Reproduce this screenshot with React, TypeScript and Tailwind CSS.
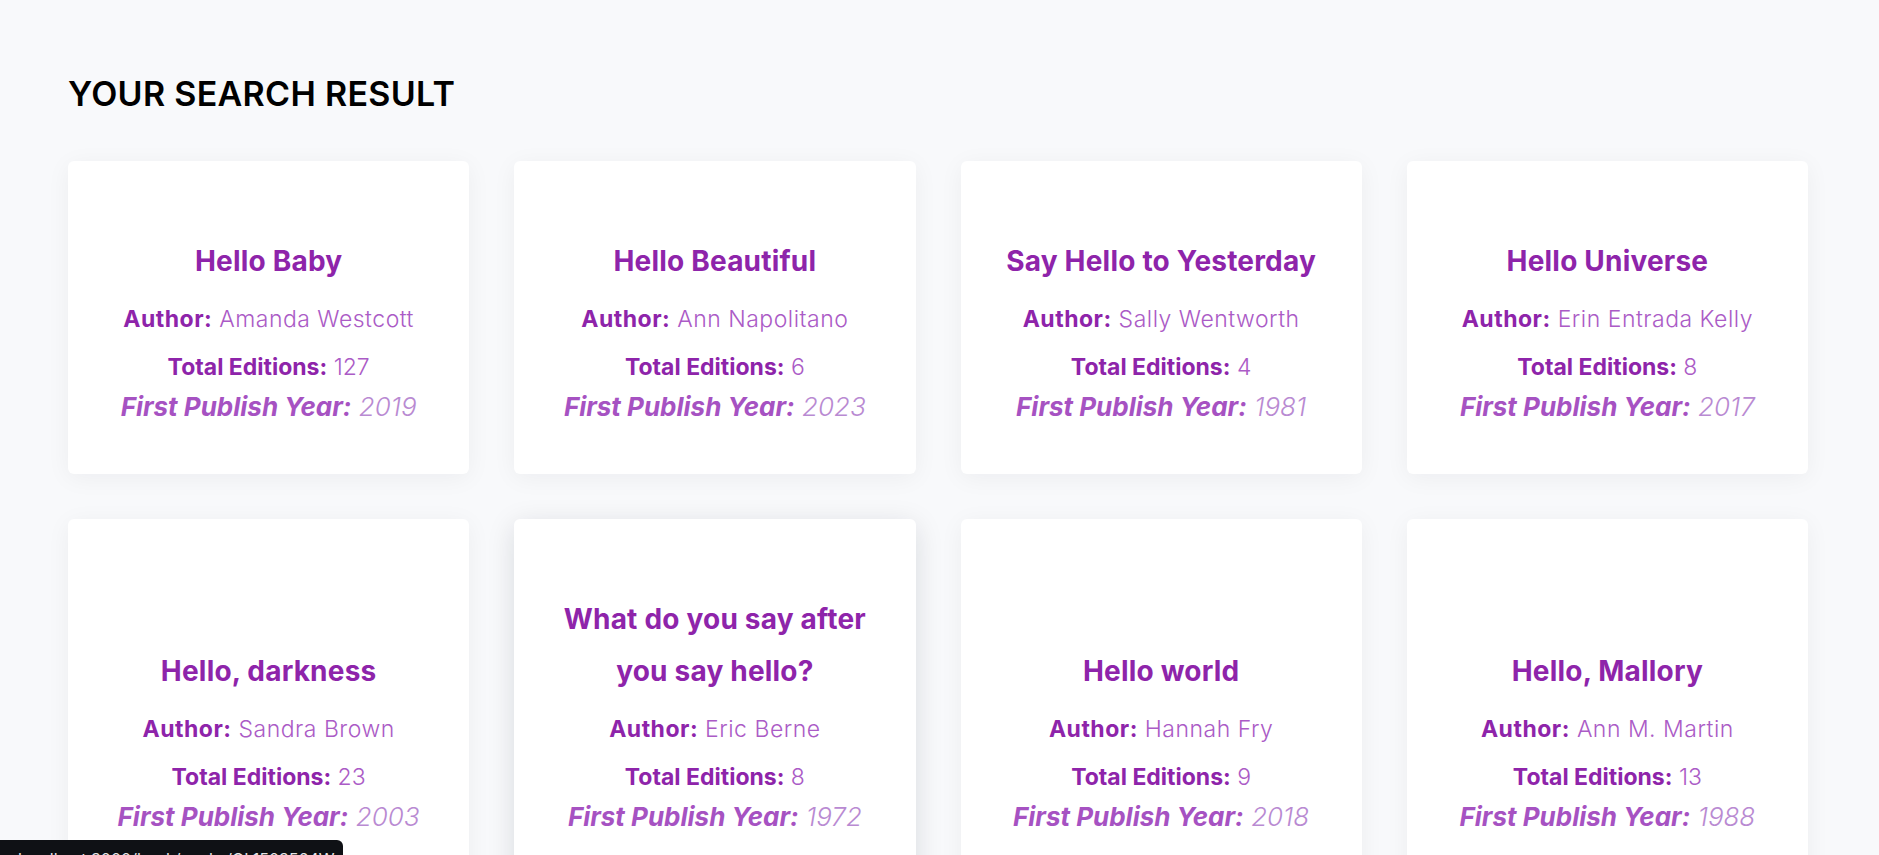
import React from "react";

type Book = { title: string; author: string; editions: number; year: number };

const books: Book[] = [
  { title: "Hello Baby", author: "Amanda Westcott", editions: 127, year: 2019 },
  { title: "Hello Beautiful", author: "Ann Napolitano", editions: 6, year: 2023 },
  { title: "Say Hello to Yesterday", author: "Sally Wentworth", editions: 4, year: 1981 },
  { title: "Hello Universe", author: "Erin Entrada Kelly", editions: 8, year: 2017 },
  { title: "Hello, darkness", author: "Sandra Brown", editions: 23, year: 2003 },
  { title: "What do you say after you say hello?", author: "Eric Berne", editions: 8, year: 1972 },
  { title: "Hello world", author: "Hannah Fry", editions: 9, year: 2018 },
  { title: "Hello, Mallory", author: "Ann M. Martin", editions: 13, year: 1988 },
];

function Card({ book, hovered }: { book: Book; hovered?: boolean }) {
  return (
    <a
      href="#"
      className={
        "flex flex-col justify-end rounded-[6px] bg-white px-8 pt-[74px] pb-[47px] text-center " +
        (hovered
          ? "shadow-[0_6px_28px_rgba(15,23,42,0.13)]"
          : "shadow-[0_4px_24px_rgba(15,23,42,0.05)]")
      }
    >
      <h2 className="text-[28px] font-bold leading-[52px] tracking-[0.2px] text-[#8e24aa]">{book.title}</h2>
      <p className="mt-3 text-[23px] leading-[40px] tracking-[0.5px] text-[#8e24aa]">
        <span className="font-bold">Author:</span>{" "}
        <span className="font-light text-[#ab5bc6]">{book.author}</span>
      </p>
      <p className="mt-2 text-[23px] leading-[40px] text-[#8e24aa]">
        <span className="font-bold">Total Editions:</span>{" "}
        <span className="font-light text-[#ab5bc6]">{book.editions}</span>
      </p>
      <p className="text-[26px] italic leading-[40px] text-[#a652c2]">
        <span className="font-bold">First Publish Year:</span>{" "}
        <span className="font-light text-[#b98ad2]">{book.year}</span>
      </p>
    </a>
  );
}

export default function App() {
  return (
    <div
      className="min-h-screen bg-[#f8f9fb] pl-[68px] pr-[71px] pt-[74px] pb-10"
      style={{ fontFamily: "Inter, 'Open Sans', sans-serif" }}
    >
      <h1 className="text-[34px] font-semibold leading-[40px] tracking-[0.3px] text-black">YOUR SEARCH RESULT</h1>
      <div className="mt-[47px] grid grid-cols-4 gap-[45px]">
        {books.map((b, i) => (
          <Card key={i} book={b} hovered={i === 5} />
        ))}
      </div>
      <div className="fixed left-0 top-[840px] h-[30px] w-[343px] overflow-hidden rounded-tr-[6px] bg-[#0f1115] pl-[18px] pt-[9px] text-[16px] leading-[20px] text-[#e6e6e6]">
        localhost:3000/book/works/OL1503564W
      </div>
    </div>
  );
}
